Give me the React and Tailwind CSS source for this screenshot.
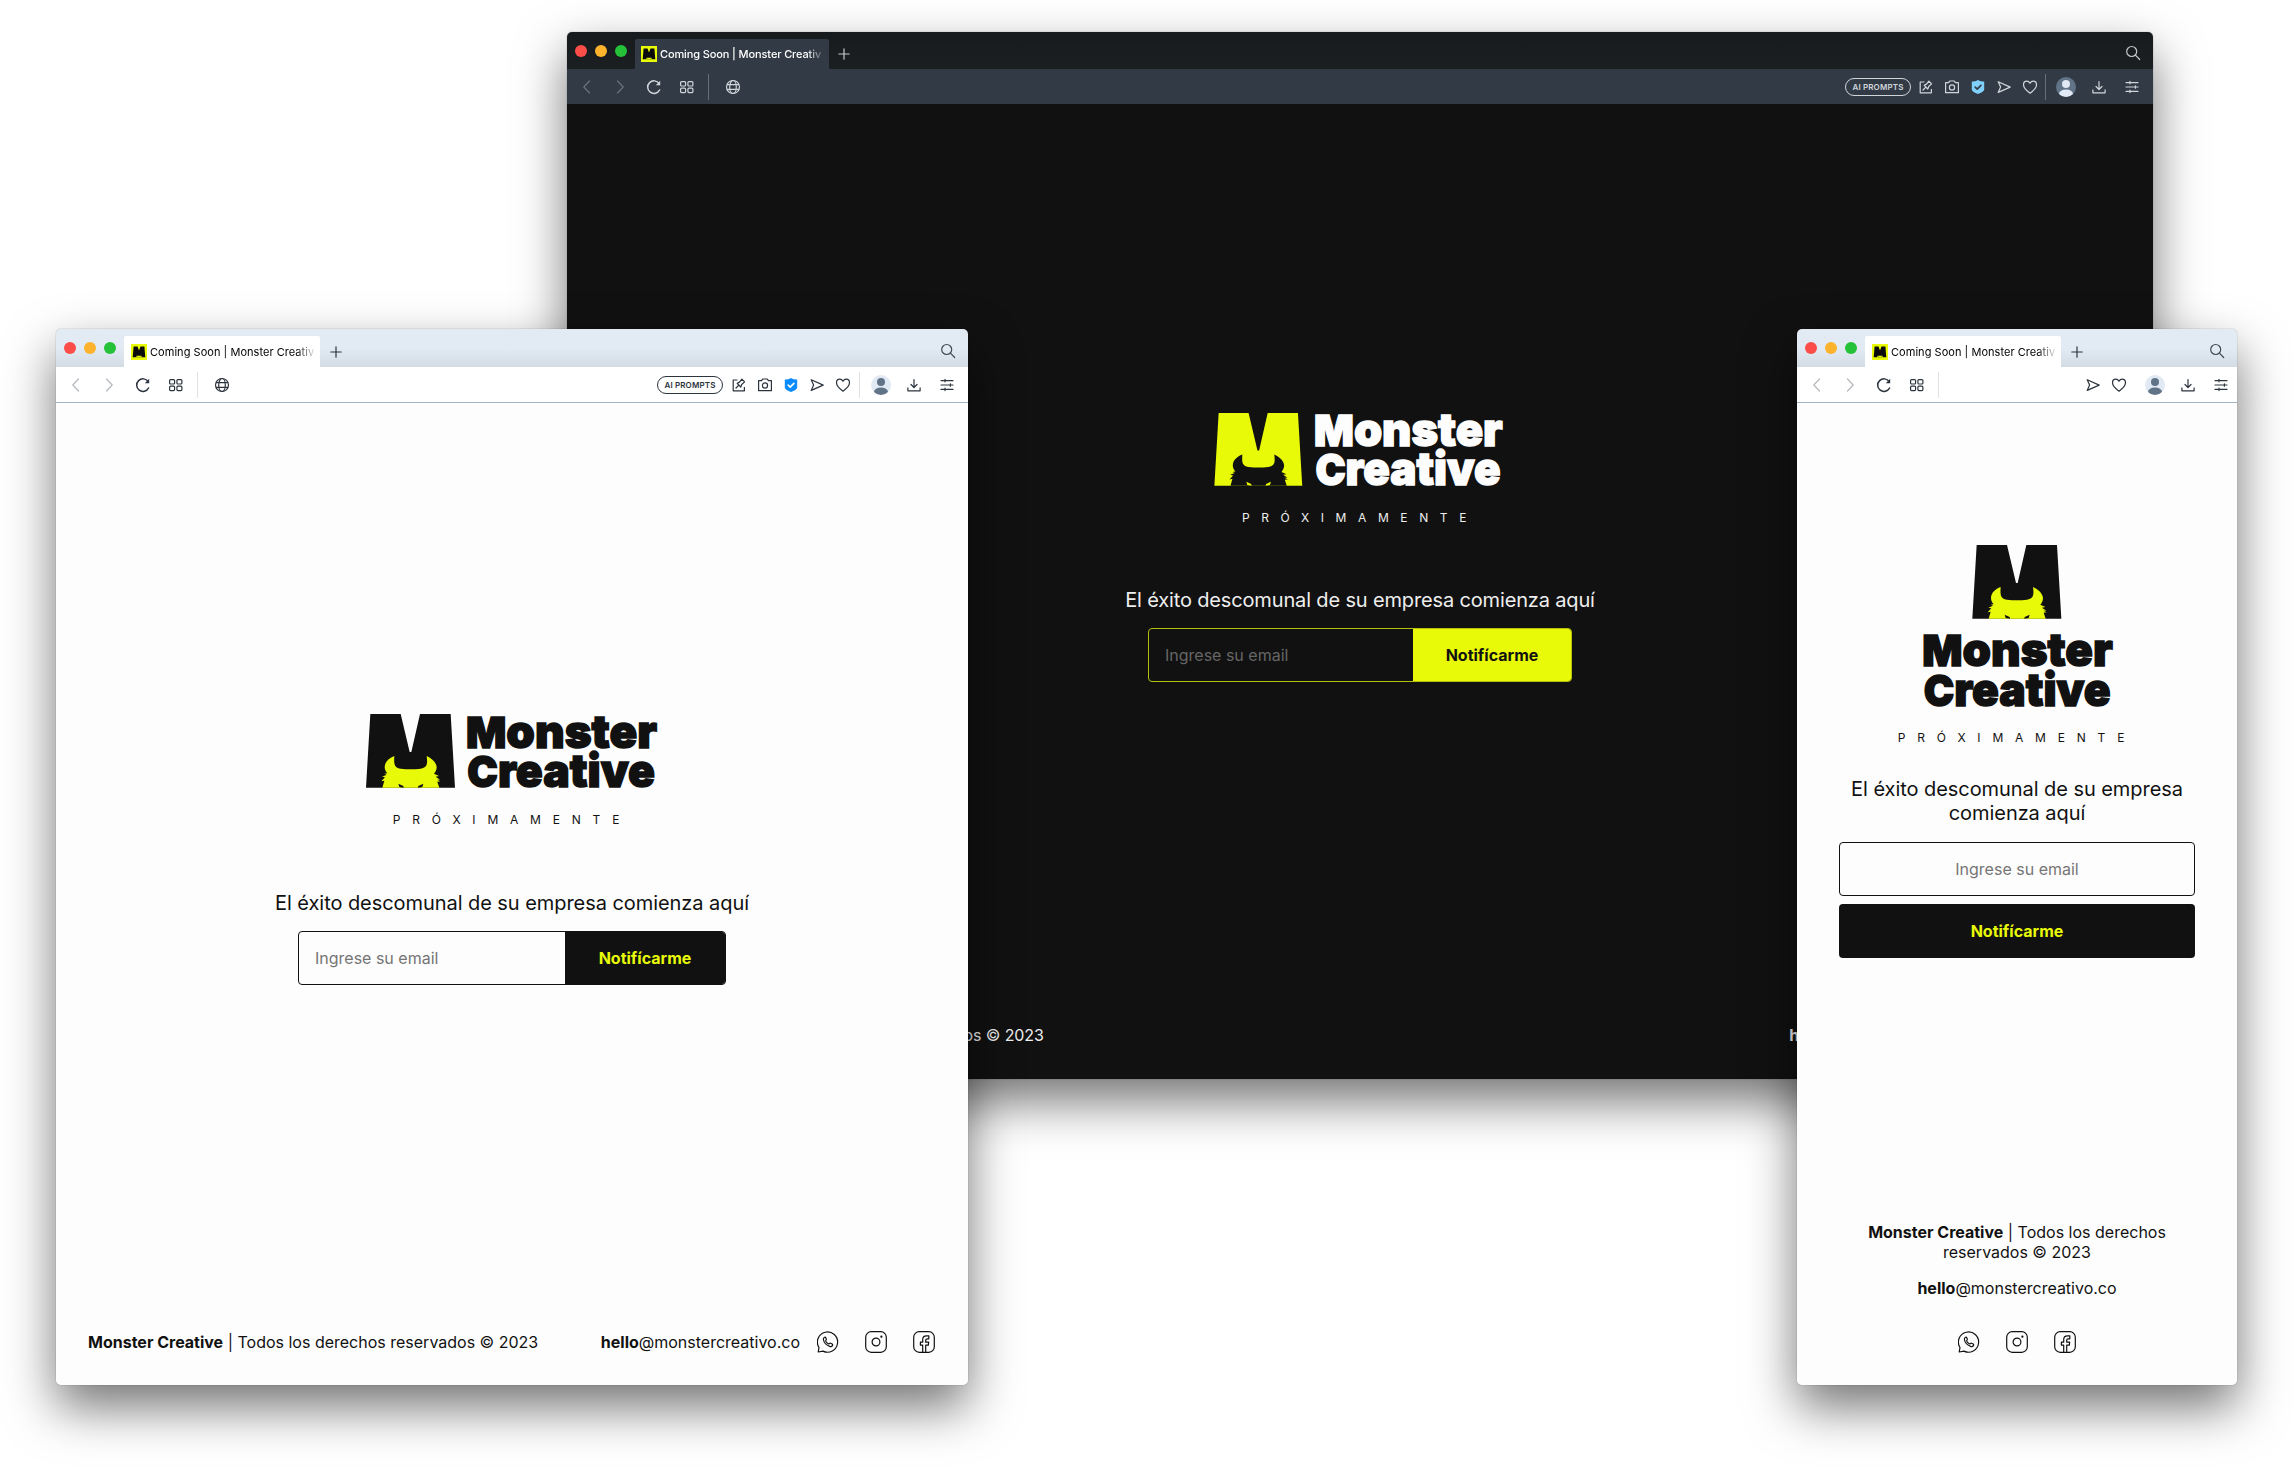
import React from "react";

const line = {
  fill: "none",
  stroke: "currentColor",
  strokeWidth: 1.2,
  strokeLinecap: "round",
  strokeLinejoin: "round",
};

function Icon({ size = 16, view = 16, children, className = "" }) {
  return (
    <svg width={size} height={size} viewBox={`0 0 ${view} ${view}`} className={`shrink-0 ${className}`} {...line}>
      {children}
    </svg>
  );
}

const Back = () => <Icon><path d="M10.5 2 4.8 8l5.7 6" /></Icon>;
const Forward = () => <Icon><path d="m5.5 2 5.7 6-5.7 6" /></Icon>;
const Reload = () => (
  <Icon className="overflow-visible">
    <path strokeWidth="1.5" d="M13.2 4.6A6.3 6.3 0 1 0 13.6 11" />
    <path d="M14.2 1.8v4.4H9.8z" fill="currentColor" stroke="none" />
  </Icon>
);
const Tiles = () => (
  <Icon>
    <rect x="1.6" y="2.6" width="5" height="4.4" rx="1" />
    <rect x="8.9" y="2.6" width="5" height="4.4" rx="1" />
    <rect x="1.6" y="9.2" width="5" height="4.4" rx="1" />
    <rect x="8.9" y="9.2" width="5" height="4.4" rx="1" />
  </Icon>
);
const Globe = () => (
  <Icon>
    <circle cx="8" cy="8" r="6.5" />
    <ellipse cx="8" cy="8" rx="3.3" ry="6.5" />
    <path d="M2.4 5.7h11.2M2.4 10.3h11.2" />
  </Icon>
);
const Pin = () => (
  <Icon>
    <path d="M6.5 3H2.2v10.8h11.2V10" strokeLinecap="butt" />
    <path d="M5 11 7.6 8.3M6.2 6.3l3.6 3.7.9-2.5 2.9-2.6-2.7-2.8-2.4 3z" />
  </Icon>
);
const Camera = () => (
  <Icon>
    <path d="M1.6 3.7h3L5.7 2h4.6l1.1 1.7h3v10H1.6z" />
    <circle cx="8" cy="8.5" r="2.6" />
  </Icon>
);
const Shield = ({ dark }) => (
  <Icon>
    <path
      d="M8 0.9c1.9 1.1 3.900 1.500 6.200 1.600v7.700c0 2.100-2.900 3.500-6.200 4.800-3.300-1.300-6.200-2.700-6.200-4.800V2.500C4.100 2.400 6.100 2 8 0.900z"
      fill={dark ? "#7fd0fb" : "#0a8cff"}
      stroke="none"
    />
    <path d="m5.200 8.100 2 2 3.700-3.800" stroke={dark ? "#323b45" : "#fff"} strokeWidth="1.700" />
  </Icon>
);
const Send = () => <Icon><path d="m2.200 2.800 12 5.300-12 5.300 2.400-5.300z" /></Icon>;
const Heart = () => (
  <Icon>
    <path d="M8 14.200C4.500 11.700 1.500 9 1.500 5.800c0-2 1.400-3.600 3.300-3.600C6.200 2.200 7.300 3 8 4.300c.7-1.300 1.800-2.100 3.200-2.100 1.900 0 3.300 1.600 3.300 3.600 0 3.200-3 5.900-6.500 8.400z" />
  </Icon>
);
const Download = () => (
  <Icon>
    <path d="M8 2.500v7.800M5 7.500l3 3 3-3M1.900 10.900v2.900h12.200v-2.900" />
  </Icon>
);
const Sliders = () => (
  <Icon>
    <path d="M2 3.600h12M2 8h12M2 12.400h12M6 2.400v2.400M11.400 6.800v2.400M6 11.200v2.400" />
  </Icon>
);
const Search = () => (
  <Icon>
    <circle cx="6.700" cy="6.500" r="5" />
    <path d="m10.400 10.200 4.300 4.300" />
  </Icon>
);
const Plus = () => (
  <Icon size={14} view={14}>
    <path d="M7 1.800v10.400M1.800 7h10.400" />
  </Icon>
);
const Avatar = ({ dark }) => (
  <svg width="20" height="20" viewBox="0 0 20 20" className="shrink-0 overflow-hidden rounded-full">
    <rect width="20" height="20" fill={dark ? "#607387" : "#e1e9f4"} />
    <circle cx="10" cy="7.100" r="4" fill={dark ? "#e1e9f4" : "#607387"} />
    <ellipse cx="10" cy="17" rx="7" ry="4.500" fill={dark ? "#e1e9f4" : "#607387"} />
  </svg>
);
const Favicon = () => (
  <svg width="16" height="16" viewBox="0 0 16 16" className="shrink-0">
    <rect width="16" height="16" fill="#e8fa08" />
    <path d="M2.600 2.400h3.900L8 6.600l1.500-4.200h3.900L14.300 13.200h-3.400l-.5-1.500H5.600l-.5 1.500H1.700z" fill="#0b0b0b" />
    <path d="M6.200 12.700v.8M8 13v.6M9.800 12.700v.8" stroke="#0b0b0b" strokeWidth="0.700" />
  </svg>
);

function Slot({ w = "w-[26px]", className = "", children }) {
  return <div className={`flex h-full shrink-0 items-center justify-center ${w} ${className}`}>{children}</div>;
}

/* Browser window: tab strip, toolbar and page area. */
function BrowserWindow({ place, dark, compact, children }) {
  const strip = dark
    ? "h-[37px] bg-gradient-to-b from-[#171b1e] to-[#1b1f21]"
    : "h-[38px] bg-gradient-to-b from-[#e2eaf4] from-50% to-[#d3dbe5]";
  const bar = dark ? "h-[35px] bg-[#323b45] text-[#d0d5da]" : "h-[36px] border-b border-[#a3b5c5] bg-white text-[#2c343d]";
  const faint = dark ? "text-[#68727c]" : "text-[#b5b9be]";
  const rule = dark ? "bg-[#66707a]" : "bg-[#dfe2e5]";
  return (
    <section
      className={`absolute flex flex-col overflow-hidden rounded-[5px] shadow-[0_0_1px_rgba(0,0,0,0.6),0_22px_50px_rgba(0,0,0,0.55)] ${place}`}
    >
      <header className={`flex shrink-0 items-end ${strip}`}>
        <div className={`flex shrink-0 gap-2 pl-2 ${dark ? "pb-[12px]" : "pb-[13px]"}`}>
          <i className="size-3 rounded-full bg-[#fc4e48]" />
          <i className="size-3 rounded-full bg-[#fdb32b]" />
          <i className="size-3 rounded-full bg-[#25c138]" />
        </div>
        <div
          className={`flex shrink-0 items-center rounded-t-[2px] ${
            dark ? "ml-2 h-[30px] w-[194px] bg-[#323b45] pl-[6px] text-white" : "ml-2 h-[31px] w-[196px] bg-white pl-[7px] text-black"
          }`}
        >
          <Favicon />
          <span
            className={`ml-[3px] w-[165px] overflow-hidden whitespace-nowrap text-[11px] leading-4 ${
              dark
                ? "font-medium tracking-[-0.120px] [mask-image:linear-gradient(to_right,black_89%,transparent_100%)]"
                : "tracking-[0.040px] [mask-image:linear-gradient(to_right,black_89%,transparent_101%)]"
            }`}
          >
            Coming Soon | Monster Creativ
          </span>
        </div>
        <div className={`flex h-[30px] items-center ${dark ? "ml-2 text-[#c4c8cb]" : "ml-[9px] text-[#2c343d]"}`}>
          <Plus />
        </div>
        <div className={`ml-auto flex h-[32px] items-center pr-[12px] ${dark ? "text-[#c4c8cb]" : "text-[#414a53]"}`}>
          <Search />
        </div>
      </header>

      <nav className={`flex shrink-0 items-center pl-[3px] ${compact ? "pr-0" : "pr-[5px]"} ${bar}`}>
        <Slot w="w-[33px]" className={faint}><Back /></Slot>
        <Slot w="w-[34px]" className={faint}><Forward /></Slot>
        <Slot w="w-[33px]"><Reload /></Slot>
        <Slot w="w-[33px]"><Tiles /></Slot>
        <i className={`ml-[5px] h-[26px] w-px ${rule}`} />
        {!compact && <Slot className="ml-[11px]"><Globe /></Slot>}
        <div className="ml-auto flex h-full items-center">
          {!compact && (
            <>
              <span
                className={`flex h-[18px] w-[66px] items-center justify-center rounded-full border border-current text-[8px] font-semibold leading-none tracking-[0.150px] ${
                  dark ? "mr-[2px]" : "mr-[3px]"
                }`}
              >
                AI PROMPTS
              </span>
              <Slot><Pin /></Slot>
              <Slot><Camera /></Slot>
              <Slot><Shield dark={dark} /></Slot>
            </>
          )}
          <Slot><Send /></Slot>
          <Slot w={dark ? "w-[25px]" : "w-[26px]"}><Heart /></Slot>
          {compact ? (
            <i className="w-[6px]" />
          ) : (
            <i className={`ml-[3px] h-[26px] w-px ${dark ? "mr-[4px]" : "mr-[4px]"} ${rule}`} />
          )}
          <Slot w={dark ? "w-[32px]" : "w-[33px]"}><Avatar dark={dark} /></Slot>
          <Slot w="w-[33px]"><Download /></Slot>
          <Slot w="w-[33px]"><Sliders /></Slot>
        </div>
      </nav>

      <main className={`flex grow flex-col items-center ${dark ? "bg-[#111111] text-[#eeeeee]" : "bg-[#fdfdfd] text-[#111111]"}`}>
        {children}
      </main>
    </section>
  );
}

/* The monster mark: an "M" block with a horned head rising from its foot. */
function Mark({ dark }) {
  const body = dark ? "#e8fa08" : "#111111";
  const beast = dark ? "#111111" : "#e8fa08";
  return (
    <>
      <path d="M13 0H104L131 114H136L162 0H254L267 221H0Z" fill={body} />
      <path
        d="M49 221 55 200 46 202 57 190 48 188 62 182 55 179 64 178C58 171 56 165 56 158C57 143 69 132 85 126C84 140 84 150 88 156C92 162 98 164 104 164Q134 168 164 164C171 163 176 161 180 156C184 150 184 140 182 126C197 133 211 145 212 159C212 167 209 173 204 179L219 186 209 188 222 197 213 197 223 202 214 203 220 221Z"
        fill={beast}
      />
      <path d="M97 209 112 216 113 221 100 219ZM172 209 157 216 156 221 169 219Z" fill={body} />
    </>
  );
}

function Word({ x, y, first, rest, length }) {
  return (
    <text x={x} y={y} textLength={length} lengthAdjust="spacingAndGlyphs" fontSize="129" strokeWidth="4.500" strokeLinejoin="miter">
      {first}
      <tspan fontSize="140">{rest}</tspan>
    </text>
  );
}

function Logo({ dark, stacked }) {
  const ink = dark ? "#fdfdfd" : "#111111";
  const width = dark ? 289 : 292;
  const height = dark ? 77 : 78;
  const type = { fill: ink, stroke: ink, className: "font-['Inter'] font-black" };
  if (stacked) {
    return (
      <svg width="190" height="166" viewBox="0 0 570 498" className="shrink-0 overflow-visible">
        <g transform="translate(151 0)"><Mark /></g>
        <g {...type}>
          <Word x="1" y="364" first="M" rest="onster" length={571} />
          <Word x="5" y="483" first="C" rest="reative" length={561} />
        </g>
      </svg>
    );
  }
  return (
    <svg width={width} height={height} viewBox="0 0 876 234" className="shrink-0 overflow-visible">
      <Mark dark={dark} />
      <g {...type}>
        <Word x={dark ? 303 : 300} y="101" first="M" rest="onster" length={573} />
        <Word x={dark ? 307 : 304} y="220" first="C" rest="reative" length={563} />
      </g>
    </svg>
  );
}

function Soon({ className = "" }) {
  return <p className={`whitespace-nowrap text-[12px] leading-4 ${className}`}>PRÓXIMAMENTE</p>;
}

function Copyright() {
  return (
    <>
      <b className="font-bold">Monster Creative</b> | Todos los derechos reservados © 2023
    </>
  );
}
function Mail() {
  return <><b className="font-bold">hello</b>@monstercreativo.co</>;
}

function Socials({ className = "" }) {
  return (
    <div className={`flex gap-[26px] ${className}`}>
      <Icon size={22} view={22}>
        <path d="M1.200 21 2 16.500A10.100 10.100 0 1 1 6 20.100z" />
        <path d="M7.600 6.200c-.9.400-1.400 1.200-1.200 2.300.6 3.200 3 5.700 6.200 6.900 1.200.4 2.300.1 2.900-1 .3-.5.200-1.100-.3-1.400l-1.500-.8c-.5-.3-.9-.2-1.300.3-.5.500-.9.500-1.500.1-1-.7-1.600-1.400-2.100-2.400-.2-.5-.1-.8.300-1.200.3-.4.3-.7.100-1.200l-.6-1.300c-.2-.4-.6-.5-1-.3z" />
      </Icon>
      <Icon size={22} view={22}>
        <rect x="0.700" y="0.700" width="20.600" height="20.600" rx="5.500" />
        <circle cx="11" cy="11" r="3.900" />
        <circle cx="16.400" cy="5.700" r="0.500" fill="currentColor" />
      </Icon>
      <Icon size={22} view={22}>
        <rect x="0.700" y="0.700" width="20.600" height="20.600" rx="5.500" />
        <path d="M9.700 21.200v-7H7.400v-3h2.300V8.600c0-2.400 1.500-3.800 3.800-3.800h2.300v3h-1.500c-1.100 0-1.600.5-1.600 1.500v1.900h3l-.4 3h-2.600v7" />
      </Icon>
    </div>
  );
}

function DesktopPage() {
  return (
    <>
      <div className="mt-[309px] flex pr-[3px]"><Logo dark /></div>
      <Soon className="mt-[20px] tracking-[11.600px]" />
      <h1 className="mt-[62px] text-[20px] leading-6 tracking-[-0.150px]">El éxito descomunal de su empresa comienza aquí</h1>
      <form className="mt-[16px] flex h-[54px] w-[424px] overflow-hidden rounded-[4px] border border-[#b3c00c]">
        <div className="flex grow items-center pl-4 text-[16px] text-[#666666]">Ingrese su email</div>
        <div className="flex w-[158px] items-center justify-center bg-[#e8fa08] text-[16px] font-bold text-[#111111]">Notifícarme</div>
      </form>
      <footer className="mb-[33px] mt-auto flex w-full items-center px-8 text-[16px] leading-[22px] tracking-[-0.100px]">
        <p><Copyright /></p>
        <p className="ml-auto"><Mail /></p>
        <Socials className="ml-[17px]" />
      </footer>
    </>
  );
}

function TabletPage() {
  return (
    <>
      <div className="mt-[311px] flex pr-[1px]"><Logo /></div>
      <Soon className="mt-[20px] tracking-[11.800px]" />
      <h1 className="mt-[63px] text-[20px] leading-6 tracking-[-0.060px]">El éxito descomunal de su empresa comienza aquí</h1>
      <form className="mt-[16px] flex h-[54px] w-[428px] overflow-hidden rounded-[4px] border border-[#111111]">
        <div className="flex grow items-center pl-4 text-[16px] text-[#757575]">Ingrese su email</div>
        <div className="flex w-[160px] items-center justify-center bg-[#111111] text-[16px] font-bold text-[#e8fa08]">Notifícarme</div>
      </form>
      <footer className="mb-[32px] mt-auto flex w-full items-center pl-8 pr-[33px] text-[16px] leading-[22px]">
        <p><Copyright /></p>
        <p className="ml-auto"><Mail /></p>
        <Socials className="ml-[17px]" />
      </footer>
    </>
  );
}

function PhonePage() {
  return (
    <>
      <div className="mt-[142px] flex"><Logo stacked /></div>
      <Soon className="mt-[19px] tracking-[11.800px]" />
      <h1 className="mt-[31px] w-[356px] text-center text-[20px] leading-6 tracking-[-0.060px]">
        El éxito descomunal de su empresa comienza aquí
      </h1>
      <div className="mt-[17px] flex h-[54px] w-[356px] items-center justify-center rounded-[4px] border border-[#111111] text-[16px] text-[#757575]">
        Ingrese su email
      </div>
      <div className="mt-2 flex h-[54px] w-[356px] items-center justify-center rounded-[4px] bg-[#111111] text-[16px] font-bold text-[#e8fa08]">
        Notifícarme
      </div>
      <footer className="mb-[32px] mt-auto flex w-full flex-col items-center text-center text-[16px] leading-5">
        <p className="w-[356px]"><Copyright /></p>
        <p className="mt-4"><Mail /></p>
        <Socials className="mt-[33px]" />
      </footer>
    </>
  );
}

export default function App() {
  return (
    <div className="relative h-[1466px] w-[2293px] overflow-hidden bg-white font-['Inter',sans-serif]">
      <BrowserWindow place="left-[567px] top-[32px] h-[1047px] w-[1586px]" dark>
        <DesktopPage />
      </BrowserWindow>
      <BrowserWindow place="left-[56px] top-[329px] h-[1056px] w-[912px]">
        <TabletPage />
      </BrowserWindow>
      <BrowserWindow place="left-[1797px] top-[329px] h-[1056px] w-[440px]" compact>
        <PhonePage />
      </BrowserWindow>
    </div>
  );
}
